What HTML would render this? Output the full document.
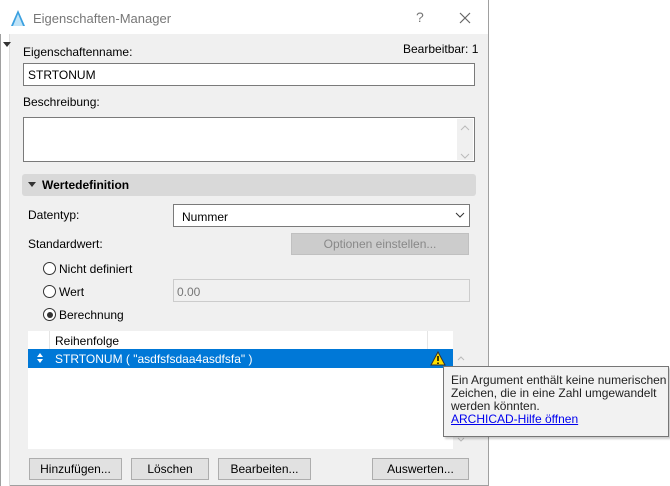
<!DOCTYPE html>
<html><head><meta charset="utf-8"><style>
*{box-sizing:border-box;margin:0;padding:0}
body{width:670px;height:486px;background:#fff;font-family:"Liberation Sans",sans-serif;font-size:12px;color:#000;position:relative;overflow:hidden}
.a{position:absolute}
.dlg{left:0;top:0;width:489px;height:486px;border:1px solid #a0a0a0;border-top:none;background:#f0f0f0}
.title{left:0;top:0;width:488px;height:34px;background:#fff}
.inp{background:#fff;border:1px solid #7a7a7a}
.btn{background:#e1e1e1;border:1px solid #adadad;text-align:center;line-height:20px}
.radio{width:13px;height:13px;border:1px solid #333;border-radius:50%;background:#fff}
</style></head><body>
<div class="a dlg"></div>
<div class="a title"></div>
<div class="a" style="left:1px;top:34px;width:9px;height:452px;background:#fff;border-right:1px solid #ddd"></div>
<svg class="a" style="left:10px;top:9px" width="16" height="18"><path d="M1 17 L8 1 L15 17 Z" fill="#3aa0e0"/><path d="M3 17 L8 5 L13 17Z" fill="#bfe3f7"/></svg>
<div class="a" style="left:33px;top:11px;font-size:13px;color:#777">Eigenschaften-Manager</div>
<div class="a" style="left:416px;top:9px;font-size:14px;color:#777">?</div>
<svg class="a" style="left:459px;top:12px" width="12" height="12"><path d="M1 1L11 11M11 1L1 11" stroke="#666" stroke-width="1.2"/></svg>
<svg class="a" style="left:3px;top:42px" width="8" height="6"><path d="M0 0H8L4 5Z" fill="#333"/></svg>
<div class="a" style="left:23px;top:45px">Eigenschaftenname:</div>
<div class="a" style="left:403px;top:42px">Bearbeitbar: 1</div>
<div class="a inp" style="left:23px;top:63px;width:452px;height:23px;padding:4px 4px">STRTONUM</div>
<div class="a" style="left:23px;top:95px">Beschreibung:</div>
<div class="a inp" style="left:23px;top:117px;width:452px;height:45px"></div>
<div class="a" style="left:457px;top:119px;width:16px;height:41px;background:#f0f0f0"></div>
<svg class="a" style="left:460px;top:124px" width="10" height="36"><path d="M1 6L5 2L9 6M1 30L5 34L9 30" stroke="#bbb" fill="none"/></svg>
<div class="a" style="left:22px;top:174px;width:454px;height:22px;background:#d9d9d9;border-radius:3px"></div>
<svg class="a" style="left:28px;top:182px" width="8" height="6"><path d="M0 0H8L4 5Z" fill="#333"/></svg>
<div class="a" style="left:42px;top:178px;font-weight:bold">Wertedefinition</div>
<div class="a" style="left:28px;top:208px">Datentyp:</div>
<div class="a inp" style="left:173px;top:204px;width:297px;height:23px;padding:5px 8px">Nummer</div>
<svg class="a" style="left:455px;top:212px" width="10" height="7"><path d="M1 1L5 5L9 1" stroke="#333" fill="none"/></svg>
<div class="a" style="left:28px;top:237px">Standardwert:</div>
<div class="a" style="left:291px;top:233px;width:178px;height:22px;background:#cccccc;border:1px solid #c0c0c0;color:#888;text-align:center;line-height:20px">Optionen einstellen...</div>
<div class="a radio" style="left:43px;top:262px"></div><div class="a" style="left:59px;top:262px">Nicht definiert</div>
<div class="a radio" style="left:43px;top:285px"></div><div class="a" style="left:59px;top:285px">Wert</div>
<div class="a" style="left:173px;top:279px;width:297px;height:23px;border:1px solid #ccc;background:#f0f0f0;color:#777;padding:5px 3px">0.00</div>
<div class="a radio" style="left:43px;top:308px"></div><div class="a" style="left:47px;top:312px;width:6px;height:6px;border-radius:50%;background:#333"></div><div class="a" style="left:59px;top:308px">Berechnung</div>
<div class="a" style="left:28px;top:331px;width:425px;height:118px;background:#fff"></div>
<div class="a" style="left:49px;top:331px;width:1px;height:18px;background:#e5e5e5"></div>
<div class="a" style="left:427px;top:331px;width:1px;height:18px;background:#e5e5e5"></div>
<div class="a" style="left:55px;top:334px">Reihenfolge</div>
<div class="a" style="left:28px;top:349px;width:425px;height:19px;background:#0078d7"></div>
<svg class="a" style="left:37px;top:353px" width="6" height="10"><path d="M0 4L3 0L6 4ZM0 6L3 10L6 6Z" fill="#fff"/></svg>
<div class="a" style="left:55px;top:352px;color:#fff">STRTONUM ( "asdfsfsdaa4asdfsfa" )</div>
<svg class="a" style="left:430px;top:351px" width="16" height="15"><path d="M8 1L15 14H1Z" fill="#ffe000" stroke="#333"/><path d="M8 5V10M8 11.5V13" stroke="#000" stroke-width="1.5"/></svg>
<svg class="a" style="left:456px;top:354px" width="10" height="90"><path d="M2 6L5 3L8 6M2 84L5 87L8 84" stroke="#bbb" fill="none"/></svg>
<div class="a" style="left:443px;top:366px;width:226px;height:71px;background:#f2f2f2;border:1px solid #767676;box-shadow:2px 2px 2px rgba(0,0,0,.2)"></div>
<div class="a" style="left:451px;top:374px;line-height:13px;color:#222">Ein Argument enthält keine numerischen<br>Zeichen, die in eine Zahl umgewandelt<br>werden könnten.<br><span style="color:#0000ee;text-decoration:underline">ARCHICAD-Hilfe öffnen</span></div>
<div class="a btn" style="left:29px;top:458px;width:93px;height:22px">Hinzufügen...</div>
<div class="a btn" style="left:131px;top:458px;width:78px;height:22px">Löschen</div>
<div class="a btn" style="left:218px;top:458px;width:93px;height:22px">Bearbeiten...</div>
<div class="a btn" style="left:372px;top:458px;width:97px;height:22px">Auswerten...</div>
</body></html>
